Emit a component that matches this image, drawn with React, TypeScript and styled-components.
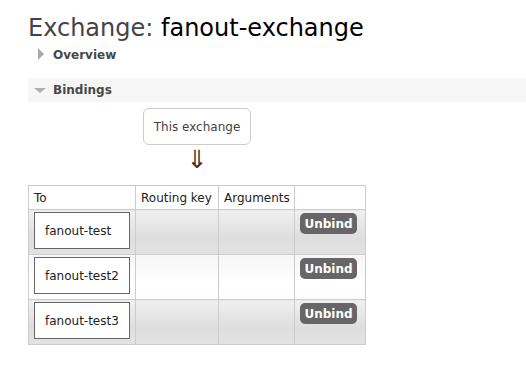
import React from "react";
import styled, { createGlobalStyle } from "styled-components";

const Global = createGlobalStyle`
  html, body { margin: 0; padding: 0; background: #fff; }
  body { font-family: "DejaVu Sans", Verdana, sans-serif; font-size: 12px; color: #444; }
`;

const Page = styled.div`
  padding: 13px 0 0 28px;
`;

const Title = styled.h1`
  margin: 0;
  font-size: 24px;
  font-weight: normal;
  line-height: 30px;
  color: #444;
  span { color: #000; }
`;

const SectionHead = styled.div<{ $open?: boolean }>`
  display: flex;
  align-items: center;
  height: 24px;
  padding-left: ${(p) => (p.$open ? "6px" : "10px")};
  background: ${(p) => (p.$open ? "#f6f6f6" : "transparent")};
  font-weight: bold;
  color: #484848;
  font-size: 12px;
`;

const TriRight = styled.span`
  width: 0;
  height: 0;
  border-top: 6px solid transparent;
  border-bottom: 6px solid transparent;
  border-left: 6px solid #aaa;
  margin-right: 9px;
  margin-top: -2px;
`;

const TriDown = styled.span`
  width: 0;
  height: 0;
  border-left: 6px solid transparent;
  border-right: 6px solid transparent;
  border-top: 5px solid #b0b0b0;
  margin-right: 7px;
`;

const Gap = styled.div<{ $h: number }>`
  height: ${(p) => p.$h}px;
`;

const Flow = styled.div`
  display: flex;
  flex-direction: column;
  align-items: center;
  width: 108px;
  margin: 6px 0 0 115px;
`;

const ExBox = styled.div`
  box-sizing: border-box;
  width: 108px;
  height: 37px;
  border: 1px solid #ccc;
  border-radius: 6px;
  display: flex;
  align-items: center;
  justify-content: center;
  color: #444;
`;

const Arrow = styled.div`
  font-size: 25px;
  line-height: 24px;
  height: 26px;
  color: #333;
  margin-top: 3px;
`;

const Table = styled.table`
  border-collapse: collapse;
  table-layout: fixed;
  width: 338px;
  margin-top: 11px;
  font-size: 12px;
`;

const Col = styled.col<{ $w: number }>`
  width: ${(p) => p.$w}px;
`;

const Th = styled.th`
  border: 1px solid #ccc;
  height: 23px;
  padding: 0 5px;
  text-align: left;
  font-weight: normal;
  color: #222;
  background: #fff;
  white-space: nowrap;
`;

const Tr = styled.tr<{ $alt: boolean }>`
  td {
    background: ${(p) =>
      p.$alt
        ? "linear-gradient(#f0f0f0, #dedede 60%, #e2e2e2)"
        : "linear-gradient(#f6f6f6, #ffffff 60%, #fdfdfd)"};
  }
`;

const Td = styled.td`
  border: 1px solid #ccc;
  height: 45px;
  box-sizing: border-box;
  padding: 2px 5px 5px;
  vertical-align: top;
`;

const QueueBox = styled.div`
  box-sizing: border-box;
  width: 96px;
  height: 37px;
  border: 1px solid #666;
  background: #fff;
  display: flex;
  align-items: center;
  padding-left: 10px;
  color: #222;
`;

const Button = styled.button`
  font-family: inherit;
  font-size: 12px;
  font-weight: bold;
  color: #fff;
  background: #666;
  border: none;
  border-radius: 5px;
  width: 57px;
  height: 21px;
  padding: 0;
  margin-top: 1px;
  cursor: pointer;
`;

const columns = [
  { label: "To", w: 107 },
  { label: "Routing key", w: 83 },
  { label: "Arguments", w: 76 },
  { label: "", w: 71 },
];

const queues = ["fanout-test", "fanout-test2", "fanout-test3"];

export default function App() {
  return (
    <>
      <Global />
      <Page>
        <Title>
          Exchange: <span>fanout-exchange</span>
        </Title>
        <SectionHead>
          <TriRight />
          Overview
        </SectionHead>
        <Gap $h={11} />
        <SectionHead $open>
          <TriDown />
          Bindings
        </SectionHead>
        <Flow>
          <ExBox>This exchange</ExBox>
          <Arrow>⇓</Arrow>
        </Flow>
        <Table>
          <colgroup>
            {columns.map((c, i) => (
              <Col key={i} $w={c.w} />
            ))}
          </colgroup>
          <thead>
            <tr>
              {columns.map((c, i) => (
                <Th key={i}>{c.label}</Th>
              ))}
            </tr>
          </thead>
          <tbody>
            {queues.map((q, i) => (
              <Tr key={q} $alt={i % 2 === 0}>
                <Td>
                  <QueueBox>{q}</QueueBox>
                </Td>
                <Td></Td>
                <Td></Td>
                <Td>
                  <Button>Unbind</Button>
                </Td>
              </Tr>
            ))}
          </tbody>
        </Table>
      </Page>
    </>
  );
}
